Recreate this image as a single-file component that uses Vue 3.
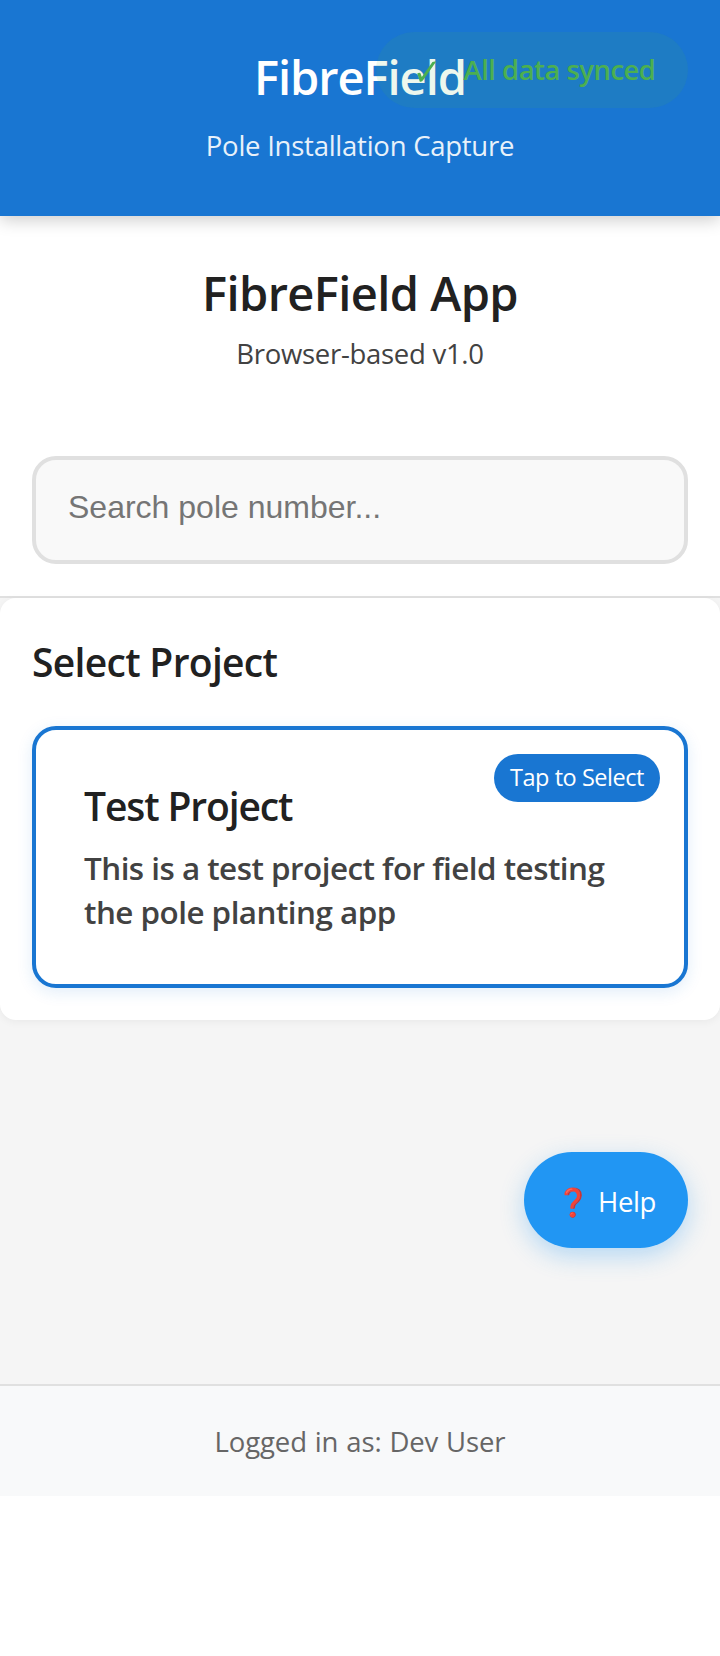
<script setup>
import { ref } from 'vue'

const search = ref('')
const project = {
  name: 'Test Project',
  description: 'This is a test project for field testing the pole planting app',
}
const user = 'Dev User'
</script>

<template>
  <div class="app">
    <header class="header">
      <h1 class="brand">FibreField</h1>
      <p class="tagline">Pole Installation Capture</p>
      <div class="sync">
        <svg class="check" viewBox="0 0 20 22" aria-hidden="true">
          <path d="M0.2 12.6Q2.6 10.8 3.6 12.4L4.8 16L15.4 1.1Q17.2 0.1 19.2 0.6L6.6 18.6Q4.6 21.6 2.7 20.6Q1.7 16.4 0.2 12.6Z" />
        </svg>
        <span class="sync-label">All data synced</span>
      </div>
    </header>

    <section class="intro">
      <h2 class="title">FibreField App</h2>
      <p class="version">Browser-based v1.0</p>
      <input v-model="search" class="search" type="text" placeholder="Search pole number..." />
    </section>

    <main class="main">
      <section class="projects">
        <h2 class="section-title">Select Project</h2>
        <article class="project">
          <span class="badge">Tap to Select</span>
          <h3 class="project-name">{{ project.name }}</h3>
          <p class="project-text">{{ project.description }}</p>
        </article>
      </section>
      <button class="help" type="button">
        <span class="help-icon">❓</span>
        <span class="help-label">Help</span>
      </button>
    </main>

    <footer class="footer">Logged in as: {{ user }}</footer>
  </div>
</template>

<style>
body {
  margin: 0;
  background: #fff;
}
</style>

<style scoped>
.app {
  display: flex;
  flex-direction: column;
  height: 1496px;
  background: #f5f5f5;
  color: #212121;
  font-family: "Open Sans", "Noto Sans", sans-serif;
}
h1, h2, h3, p {
  margin: 0;
  font-weight: 600;
}
.header {
  position: relative;
  z-index: 1;
  box-sizing: border-box;
  height: 216px;
  padding-top: 45px;
  background: #1976d2;
  color: #fff;
  text-align: center;
  box-shadow: 0 4px 16px rgba(0, 0, 0, 0.2);
}
.brand {
  font-size: 47px;
  line-height: 64px;
  letter-spacing: -1.05px;
}
.tagline {
  margin-top: 17px;
  font-size: 27.5px;
  font-weight: 400;
  line-height: 40px;
  letter-spacing: -0.25px;
  opacity: 0.9;
}
.sync {
  position: absolute;
  top: 32px;
  right: 32px;
  display: flex;
  box-sizing: border-box;
  width: 312px;
  height: 76px;
  padding: 18px 0 0 40.5px;
  border-radius: 40px;
  background: rgba(76, 175, 80, 0.1);
  color: #4caf50;
}
.check {
  width: 20px;
  height: 22px;
  margin-top: 10.5px;
  fill: #4caf50;
}
.sync-label {
  margin-left: 27px;
  font-size: 27.5px;
  font-weight: 600;
  line-height: 40px;
  letter-spacing: -0.53px;
  white-space: nowrap;
}
.intro {
  box-sizing: border-box;
  height: 382px;
  padding: 45px 32px 32px;
  border-bottom: 2px solid #e0e0e0;
  background: #fff;
  text-align: center;
}
.title {
  font-size: 47px;
  line-height: 64px;
  letter-spacing: -0.58px;
}
.version {
  margin-top: 9px;
  color: #424242;
  font-size: 27.5px;
  font-weight: 400;
  line-height: 40px;
  letter-spacing: -0.28px;
}
.search {
  display: block;
  box-sizing: border-box;
  width: 100%;
  height: 108px;
  margin-top: 82px;
  padding: 0 32px 6px;
  border: 4px solid #e0e0e0;
  border-radius: 24px;
  outline: none;
  background: #f9f9f9;
  color: #212121;
  font-family: "Liberation Sans", Arial, sans-serif;
  font-size: 32px;
}
.search::placeholder {
  color: #757575;
}
.main {
  display: flex;
  flex: 1;
  flex-direction: column;
}
.projects {
  box-sizing: border-box;
  height: 422px;
  padding: 38px 32px 32px;
  border-radius: 16px;
  background: #fff;
  box-shadow: 0 2px 8px rgba(0, 0, 0, 0.05);
}
.section-title {
  font-size: 39px;
  line-height: 52px;
  letter-spacing: -0.69px;
}
.project {
  position: relative;
  box-sizing: border-box;
  height: 262px;
  margin-top: 38px;
  padding: 50px 48px 48px;
  border: 4px solid #1976d2;
  border-radius: 24px;
  background: #fff;
  box-shadow: 0 4px 16px rgba(25, 118, 210, 0.13);
}
.badge {
  position: absolute;
  top: 24px;
  right: 24px;
  width: 166px;
  height: 48px;
  border-radius: 24px;
  background: #1976d2;
  color: #fff;
  font-size: 23.5px;
  line-height: 46px;
  letter-spacing: -0.46px;
  text-align: center;
}
.project-name {
  font-size: 39px;
  line-height: 52px;
  letter-spacing: -1.12px;
}
.project-text {
  margin-top: 14px;
  color: #424242;
  font-size: 31.4px;
  line-height: 44px;
  letter-spacing: -0.52px;
}
.help {
  display: flex;
  align-self: flex-end;
  box-sizing: border-box;
  width: 164px;
  height: 96px;
  margin: 132px 32px 0 0;
  padding: 30px 0 0 32px;
  border: 0;
  border-radius: 48px;
  background: #2196f3;
  color: #fff;
  font: 27.5px/40px "Open Sans", "Noto Sans", sans-serif;
  box-shadow: 0 8px 24px rgba(33, 150, 243, 0.3);
}
.help-icon {
  width: 42px;
  text-align: left;
}
.help-label {
  letter-spacing: -0.39px;
}
.footer {
  box-sizing: border-box;
  height: 112px;
  padding-top: 35.5px;
  border-top: 2px solid #e0e0e0;
  background: #f8f9fa;
  color: #666;
  font-size: 27.5px;
  line-height: 40px;
  letter-spacing: -0.1px;
  word-spacing: 0.8px;
  text-align: center;
}
</style>
